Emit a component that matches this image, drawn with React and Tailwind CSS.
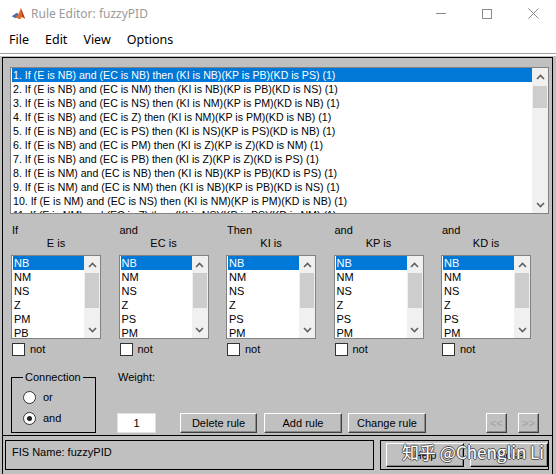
import React from 'react';

const rules = [
  '1. If (E is NB) and (EC is NB) then (KI is NB)(KP is PB)(KD is PS) (1)',
  '2. If (E is NB) and (EC is NM) then (KI is NB)(KP is PB)(KD is NS) (1)',
  '3. If (E is NB) and (EC is NS) then (KI is NM)(KP is PM)(KD is NB) (1)',
  '4. If (E is NB) and (EC is Z) then (KI is NM)(KP is PM)(KD is NB) (1)',
  '5. If (E is NB) and (EC is PS) then (KI is NS)(KP is PS)(KD is NB) (1)',
  '6. If (E is NB) and (EC is PM) then (KI is Z)(KP is Z)(KD is NM) (1)',
  '7. If (E is NB) and (EC is PB) then (KI is Z)(KP is Z)(KD is PS) (1)',
  '8. If (E is NM) and (EC is NB) then (KI is NB)(KP is PB)(KD is PS) (1)',
  '9. If (E is NM) and (EC is NM) then (KI is NB)(KP is PB)(KD is NS) (1)',
  '10. If (E is NM) and (EC is NS) then (KI is NM)(KP is PM)(KD is NB) (1)',
  '11. If (E is NM) and (EC is Z) then (KI is NS)(KP is PS)(KD is NM) (1)',
];

const outSet = ['NB', 'NM', 'NS', 'Z', 'PS', 'PM'];

const columns = [
  { top: 'If', label: 'E is', items: ['NB', 'NM', 'NS', 'Z', 'PM', 'PB'] },
  { top: 'and', label: 'EC is', items: outSet },
  { top: 'Then', label: 'KI is', items: outSet },
  { top: 'and', label: 'KP is', items: outSet },
  { top: 'and', label: 'KD is', items: outSet },
];

const Chevron = ({ up }) => (
  <svg width="9" height="6" viewBox="0 0 9 6">
    <polyline
      points={up ? '1,5 4.5,1.5 8,5' : '1,1 4.5,4.5 8,1'}
      fill="none"
      stroke="#606060"
      strokeWidth="1.6"
    />
  </svg>
);

// windows-10 style vertical scrollbar
const ScrollBar = ({ thumbTop, thumbHeight }) => (
  <div className="w-[16px] shrink-0 h-full bg-[#f0f0f0] flex flex-col">
    <div className="h-[17px] flex items-center justify-center">
      <Chevron up />
    </div>
    <div className="w-[14px] ml-[1px] bg-[#cdcdcd]" style={{ marginTop: thumbTop, height: thumbHeight }} />
    <div className="flex-1" />
    <div className="h-[17px] flex items-center justify-center">
      <Chevron />
    </div>
  </div>
);

const Btn = ({ children, className, disabled }) => (
  <div
    className={`flex items-center justify-center bg-[#c0c0c0] border border-t-white border-l-white border-b-[#404040] border-r-[#404040] shadow-[inset_-1px_-1px_0_#8a8a8a] text-[11px] ${
      disabled ? 'text-[#a0a0a0]' : 'text-black'
    } ${className}`}
  >
    {children}
  </div>
);

const MatlabIcon = () => (
  <svg width="15" height="15" viewBox="0 0 16 16">
    <path d="M1 11 L6 7.5 L8 8.5 L10.5 2 L15 13.5 L12 11.5 L9.5 14 Z" fill="#e36b26" />
    <path d="M10.5 2 L15 13.5 L12 11.5 Z" fill="#b8361c" />
    <path d="M1 11 L6 7.5 L8 8.5 L4.5 13 Z" fill="#3f74b8" />
  </svg>
);

const App = () => {
  return (
    <div className="relative w-[556px] h-[474px] overflow-hidden bg-white flex flex-col font-['Liberation_Sans',Arial,sans-serif]">
      {/* title bar */}
      <div className="h-[27px] shrink-0 flex items-center pl-[11px] font-['Noto_Sans',sans-serif]">
        <MatlabIcon />
        <span className="ml-[5px] text-[12px] text-[#9a9a9a]">Rule Editor: fuzzyPID</span>
        <div className="ml-auto flex items-center h-full">
          <div className="w-[46px] h-full flex items-center justify-center">
            <div className="w-[10px] h-px bg-[#8a8a8a]" />
          </div>
          <div className="w-[46px] h-full flex items-center justify-center">
            <div className="w-[10px] h-[10px] border border-[#8a8a8a]" />
          </div>
          <div className="w-[46px] h-full flex items-center justify-center">
            <svg width="11" height="11" viewBox="0 0 11 11">
              <path d="M0.5 0.5 L10.5 10.5 M10.5 0.5 L0.5 10.5" stroke="#8a8a8a" strokeWidth="1" />
            </svg>
          </div>
        </div>
      </div>

      {/* menu bar */}
      <div className="h-[27px] shrink-0 flex items-center gap-[16px] pl-[9px] text-[12.5px] text-black font-['Noto_Sans',sans-serif] border-b border-[#a0a0a0]">
        <span>File</span>
        <span>Edit</span>
        <span>View</span>
        <span>Options</span>
      </div>
      <div className="h-[2px] shrink-0 bg-white" />

      {/* figure area */}
      <div className="flex-1 bg-[#c0c0c0] pt-[1px]">
        <div className="ml-[2px] w-[551px] h-[420px] border-l border-r border-t border-black">
          {/* upper panel */}
          <div className="border-b border-black pb-[2px]">
            {/* rule list */}
            <div className="mt-[9px] ml-[7px] mr-[3px] h-[147px] bg-white border border-[#828282] flex">
              <div className="flex-1 overflow-hidden pl-[1px]">
                {rules.map((r, i) => (
                  <div
                    key={i}
                    className={`h-[14px] leading-[14px] text-[10.6px] pl-[1px] whitespace-nowrap ${
                      i === 0 ? 'bg-[#0078d7] text-white' : 'text-black'
                    }`}
                  >
                    {r}
                  </div>
                ))}
              </div>
              <ScrollBar thumbTop={1} thumbHeight={22} />
            </div>

            {/* variable columns */}
            <div className="mt-[10px] ml-[8px] flex gap-[17.5px]">
              {columns.map((c, ci) => (
                <div key={ci} className="w-[90px]">
                  <div className="h-[13px] leading-[13px] text-[11px] pl-[1px]">{c.top}</div>
                  <div className="h-[13px] leading-[13px] text-[11px] text-center">{c.label}</div>
                  <div className="mt-[5px] h-[84px] bg-white border border-[#828282] flex">
                    <div className="flex-1 overflow-hidden pl-[1px]">
                      {c.items.map((it, ii) => (
                        <div
                          key={ii}
                          className={`h-[14px] leading-[14px] text-[11px] pl-[1px] ${
                            ii === 0 ? 'bg-[#0078d7] text-white' : 'text-black'
                          }`}
                        >
                          {it}
                        </div>
                      ))}
                    </div>
                    <ScrollBar thumbTop={0} thumbHeight={35} />
                  </div>
                  <div className="mt-[4px] h-[13px] flex items-center">
                    <div className="ml-[1px] w-[13px] h-[13px] bg-white border border-[#333]" />
                    <span className="ml-[5px] text-[11px]">not</span>
                  </div>
                </div>
              ))}
            </div>

            {/* connection, weight and buttons */}
            <div className="mt-[15px] ml-[8px] flex">
              <div className="relative mt-[6px] w-[85px] h-[56px] border border-black">
                <span className="absolute -top-[7px] left-[11px] px-[2px] bg-[#c0c0c0] text-[11px] leading-[13px]">
                  Connection
                </span>
                <div className="pt-[13px] pl-[11px] flex flex-col gap-[8px]">
                  <div className="flex items-center h-[13px]">
                    <div className="w-[13px] h-[13px] rounded-full bg-white border border-[#333]" />
                    <span className="ml-[7px] text-[11px]">or</span>
                  </div>
                  <div className="flex items-center h-[13px]">
                    <div className="w-[13px] h-[13px] rounded-full bg-white border border-[#333] flex items-center justify-center">
                      <div className="w-[5px] h-[5px] rounded-full bg-[#222]" />
                    </div>
                    <span className="ml-[7px] text-[11px]">and</span>
                  </div>
                </div>
              </div>

              <div className="ml-[21px] flex flex-col">
                <div className="h-[13px] leading-[13px] text-[11px] pl-[1px]">Weight:</div>
                <div className="mt-[29px] flex items-center">
                  <div className="w-[39px] h-[20px] bg-white border border-[#e0e0e0] flex items-center justify-center text-[11px]">
                    1
                  </div>
                  <Btn className="ml-[24px] w-[77px] h-[20px]">Delete rule</Btn>
                  <Btn className="ml-[7px] w-[78px] h-[20px]">Add rule</Btn>
                  <Btn className="ml-[6px] w-[78px] h-[20px]">Change rule</Btn>
                  <Btn disabled className="ml-[60px] w-[21px] h-[20px]">&lt;&lt;</Btn>
                  <Btn disabled className="ml-[11px] w-[21px] h-[20px]">&gt;&gt;</Btn>
                </div>
              </div>
            </div>
          </div>

          {/* status row */}
          <div className="pt-[4px] flex">
            <div className="ml-[2px] w-[369px] h-[30px] border border-black pl-[6px] pt-[5px] text-[11px] leading-[13px]">
              FIS Name: fuzzyPID
            </div>
            <div className="ml-[6px] w-[169px] h-[30px] border border-black flex items-center pl-[5px] gap-[6px]">
              <Btn className="w-[78px] h-[24px] border-b-black border-r-black">Help</Btn>
              <Btn className="w-[78px] h-[24px] border-b-black border-r-black">Close</Btn>
            </div>
          </div>
        </div>
      </div>

      {/* watermark overlay */}
      <div className="absolute left-[402px] top-[441px] text-[17px] leading-[22px] text-white whitespace-nowrap font-['Noto_Sans_CJK_SC',sans-serif] [text-shadow:1px_0_0_#555,-1px_0_0_#555,0_1px_0_#555,0_-1px_0_#555]">
        知乎 @Chenglin Li
      </div>
    </div>
  );
};

export default App;
